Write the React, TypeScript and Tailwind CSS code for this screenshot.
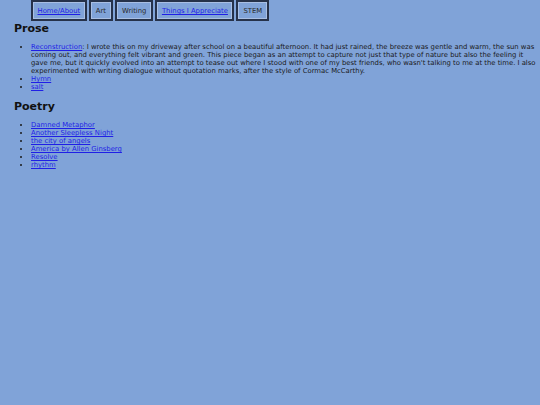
const NAV = [
  { label: 'Home/About', link: true },
  { label: 'Art', link: false },
  { label: 'Writing', link: false },
  { label: 'Things I Appreciate', link: true },
  { label: 'STEM', link: false },
]

const POETRY = ['Damned Metaphor', 'Another Sleepless Night', 'the city of angels', 'America by Allen Ginsberg', 'Resolve', 'rhythm']

const font = { fontFamily: '"DejaVu Sans", Verdana, sans-serif' }

export default function App() {
  return (
    <div className="min-h-[405px] w-[540px] bg-[#80a3d8] pl-[14px] pr-[4px] text-[6.85px] leading-[8px] text-[#1a1a1a]" style={font}>
      <ul className="m-0 flex list-none gap-[2px] pl-[17px]">
        {NAV.map((n) => (
          <li
            key={n.label}
            className={`border-2 border-[#26324a] pb-[4px] pt-[5px] shadow-[inset_0_0_0_1px_#a9bfe4] ${n.link ? 'px-[4.5px]' : 'px-[5px]'}`}
          >
            {n.link ? (
              <a className="text-[#1f1fe6] underline">{n.label}</a>
            ) : (
              <span className="text-[#2a2a2a]">{n.label}</span>
            )}
          </li>
        ))}
      </ul>

      <h2 className="mt-[1px] text-[11px] font-bold leading-[14px] text-[#111]">Prose</h2>
      <ul className="mt-[7px] list-disc pl-[17px]">
        <li>
          <a className="text-[#1f1fe6] underline">Reconstruction</a>: I wrote this on my driveway after school on a beautiful afternoon. It had just rained, the breeze was gentle and warm, the sun was coming out, and everything felt vibrant and green. This piece began as an attempt to capture not just that type of nature but also the feeling it gave me, but it quickly evolved into an attempt to tease out where I stood with one of my best friends, who wasn't talking to me at the time. I also experimented with writing dialogue without quotation marks, after the style of Cormac McCarthy.
        </li>
        <li><a className="text-[#1f1fe6] underline">Hymn</a></li>
        <li><a className="text-[#1f1fe6] underline">salt</a></li>
      </ul>

      <h2 className="mt-[9px] text-[11px] font-bold leading-[14px] text-[#111]">Poetry</h2>
      <ul className="mt-[7px] list-disc pl-[17px]">
        {POETRY.map((p) => (
          <li key={p}><a className="text-[#1f1fe6] underline">{p}</a></li>
        ))}
      </ul>
    </div>
  )
}
